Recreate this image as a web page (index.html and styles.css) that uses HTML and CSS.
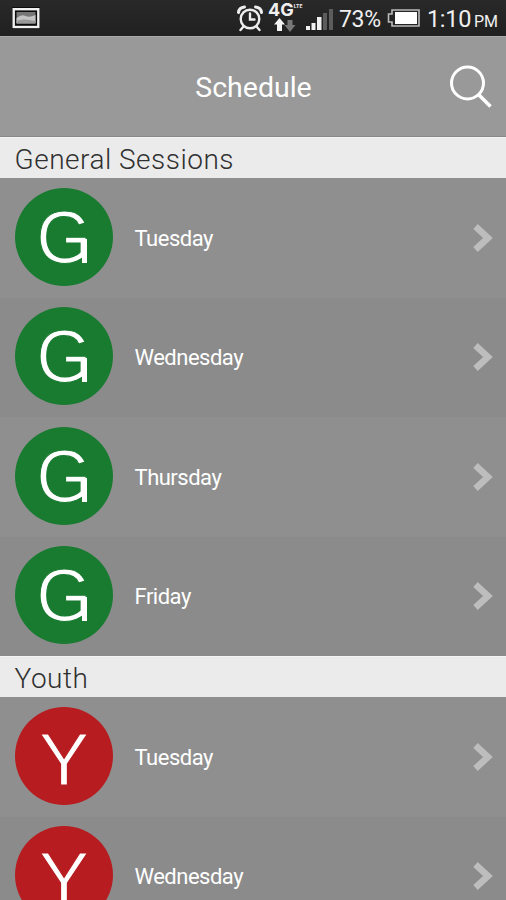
FILE: index.html
```html
<!DOCTYPE html>
<html lang="en">
<head>
  <meta charset="UTF-8">
  <meta name="viewport" content="width=device-width, initial-scale=1.0">
  <title>Schedule</title>
  <link rel="stylesheet" href="styles.css">
</head>
<body>
  <div class="status-bar">
    <svg class="picture" width="28" height="22" viewBox="0 0 28 22">
      <rect width="28" height="22" fill="#0c0c0c"/>
      <rect x="1.7" y="2.2" width="24.6" height="17.8" fill="none" stroke="#f1f1f1" stroke-width="2.4"/>
      <path d="M4.500 5h19v12h-19z" fill="#777"/>
      <path d="M4.500 11q5-4 9-2t10-1v8h-19z" fill="#c4c4c4"/>
      <path d="M4.500 14q6-3 19 0v2h-19z" fill="#999"/>
    </svg>
    <svg class="alarm" width="28" height="28" viewBox="0 0 28 28" fill="none" stroke="#eee" stroke-width="2.4" stroke-linecap="round">
      <circle cx="14" cy="15" r="9.3"/>
      <path d="M14 9.500v6h4.500M7.500 22.500 4.500 26M20.500 22.500l3 3.500"/>
      <path d="M2.500 8.500Q3 3.500 8.500 3M25.500 8.500Q25 3.500 19.500 3" stroke-width="3"/>
    </svg>
    <div class="network">
      <span class="network-type">4G<small>LTE</small></span>
      <svg width="24" height="14" viewBox="0 0 24 14">
        <path d="M6.500 0 12 6.500H9V13H4V6.500H1z" fill="#f3f3f3"/>
        <path d="M14.500 2h5v5h3L17 14l-5.500-7h3z" fill="#777"/>
      </svg>
    </div>
    <svg class="signal" width="28" height="22" viewBox="0 0 28 22">
      <path d="M0 17h4v4H0zM5.500 14h4v7h-4zM11 8h4.500v13H11z" fill="#f0f0f0"/>
      <path d="M17 4h4v17h-4zM23 0h4v21h-4z" fill="#5c5c5c"/>
    </svg>
    <span class="percent">73%</span>
    <svg class="battery" width="33" height="18" viewBox="0 0 33 18">
      <path d="M5 1h27v16H5v-4H1.500V5H5z" fill="none" stroke="#bbb" stroke-width="1.600"/>
      <rect x="8" y="3" width="22" height="12" fill="#fff"/>
    </svg>
    <span class="clock">1:10</span><span class="period">PM</span>
  </div>

  <div class="header">
    <h1>Schedule</h1>
    <svg class="search" width="44" height="44" viewBox="0 0 44 44" fill="none" stroke="#fff" stroke-width="3">
      <circle cx="18.500" cy="18" r="16"/>
      <path d="M29.500 29.500 41.500 41.500" stroke-width="3.500"/>
    </svg>
  </div>

  <h2>General Sessions</h2>
  <div class="list">
    <div class="row">
      <div class="badge general"><span>G</span></div>
      <span class="day">Tuesday</span>
      <svg class="arrow" width="22" height="28" viewBox="0 0 22 28"><path d="M3.500 2.500 16 14 3.500 25.500"/></svg>
    </div>
    <div class="row">
      <div class="badge general"><span>G</span></div>
      <span class="day">Wednesday</span>
      <svg class="arrow" width="22" height="28" viewBox="0 0 22 28"><path d="M3.500 2.500 16 14 3.500 25.500"/></svg>
    </div>
    <div class="row">
      <div class="badge general"><span>G</span></div>
      <span class="day">Thursday</span>
      <svg class="arrow" width="22" height="28" viewBox="0 0 22 28"><path d="M3.500 2.500 16 14 3.500 25.500"/></svg>
    </div>
    <div class="row">
      <div class="badge general"><span>G</span></div>
      <span class="day">Friday</span>
      <svg class="arrow" width="22" height="28" viewBox="0 0 22 28"><path d="M3.500 2.500 16 14 3.500 25.500"/></svg>
    </div>
  </div>

  <h2>Youth</h2>
  <div class="list">
    <div class="row">
      <div class="badge youth"><span>Y</span></div>
      <span class="day">Tuesday</span>
      <svg class="arrow" width="22" height="28" viewBox="0 0 22 28"><path d="M3.500 2.500 16 14 3.500 25.500"/></svg>
    </div>
    <div class="row">
      <div class="badge youth"><span>Y</span></div>
      <span class="day">Wednesday</span>
      <svg class="arrow" width="22" height="28" viewBox="0 0 22 28"><path d="M3.500 2.500 16 14 3.500 25.500"/></svg>
    </div>
  </div>
</body>
</html>
```
FILE: styles.css
```css
* {
  box-sizing: border-box;
}
body {
  margin: 0;
  height: 900px;
  overflow: hidden;
  background-color: #8e8e8e;
  font-family: Roboto, "Liberation Sans", sans-serif;
  color: #fff;
}
svg {
  display: block;
  flex-shrink: 0;
}
.status-bar {
  display: flex;
  height: 36px;
  padding: 0 8px 0 12px;
  background: linear-gradient(#292929, #202020);
  color: #f0f0f0;
}
.picture {
  margin-top: 7px;
}
.alarm {
  margin: 4px 0 0 196px;
}
.network {
  width: 34px;
  margin: 3px 0 0 4px;
}
.network svg {
  margin: 1px 0 0 5px;
}
.network-type {
  display: flex;
  height: 14px;
  font-family: Inter, sans-serif;
  font-size: 18px;
  font-weight: 700;
  line-height: 14px;
}
.network-type small {
  width: 8px;
  font-size: 5px;
  line-height: 6px;
}
.signal {
  margin: 9px 0 0 4px;
}
.percent {
  width: 43px;
  margin-left: 5px;
  font-size: 23px;
  line-height: 39px;
  letter-spacing: -0.3px;
}
.battery {
  margin: 9px 0 0 5px;
}
.clock {
  width: 43px;
  margin-left: 7px;
  font-size: 23.5px;
  line-height: 39px;
  letter-spacing: -0.3px;
}
.period {
  margin-left: 4px;
  font-size: 16px;
  line-height: 43px;
}
.header {
  display: grid;
  grid-template-columns: 1fr auto 1fr;
  align-items: center;
  height: 101px;
  padding: 0 13px;
  background-color: #999;
  border-top: 1px solid #aaa;
  border-bottom: 1px solid #888;
}
.header h1 {
  grid-column: 2;
  margin: 0;
  padding: 2px 0 0 1px;
  font-size: 28.5px;
  font-weight: 400;
  line-height: 34px;
}
.search {
  justify-self: end;
}
h2 {
  height: 41px;
  margin: 0;
  padding-left: 14.5px;
  background-color: #ebebeb;
  border-top: 1px solid #f4f4f4;
  color: #303030;
  font-size: 28px;
  font-weight: 300;
  line-height: 44px;
  letter-spacing: 0.5px;
}
.row {
  display: flex;
  align-items: center;
  height: 119.5px;
  padding: 0 12px 0 15px;
  background-color: #8f8f8f;
}
.row:nth-child(even) {
  background-color: #8b8b8b;
}
.badge {
  position: relative;
  width: 98px;
  height: 98px;
  margin-bottom: 2px;
  border-radius: 50%;
  font-family: "Liberation Sans", sans-serif;
  font-size: 75px;
  text-align: center;
}
.badge span {
  display: block;
}
/* stroke in the badge colour thins the letter */
.general {
  background-color: #197b30;
  line-height: 99px;
  -webkit-text-stroke: 1.2px #197b30;
}
.general span {
  transform: scaleX(0.94);
}
/* foot of the G */
.general::after {
  content: "";
  position: absolute;
  left: 67px;
  top: 51px;
  width: 5px;
  height: 24px;
  background-color: #fff;
}
.youth {
  background-color: #b71c20;
  line-height: 104px;
  -webkit-text-stroke: 1.2px #b71c20;
}
.day {
  flex: 1;
  margin-left: 21.5px;
  padding-top: 1px;
  font-size: 22px;
  letter-spacing: -0.5px;
}
.arrow path {
  fill: none;
  stroke: #bdbdbd;
  stroke-width: 6.5;
}
```
